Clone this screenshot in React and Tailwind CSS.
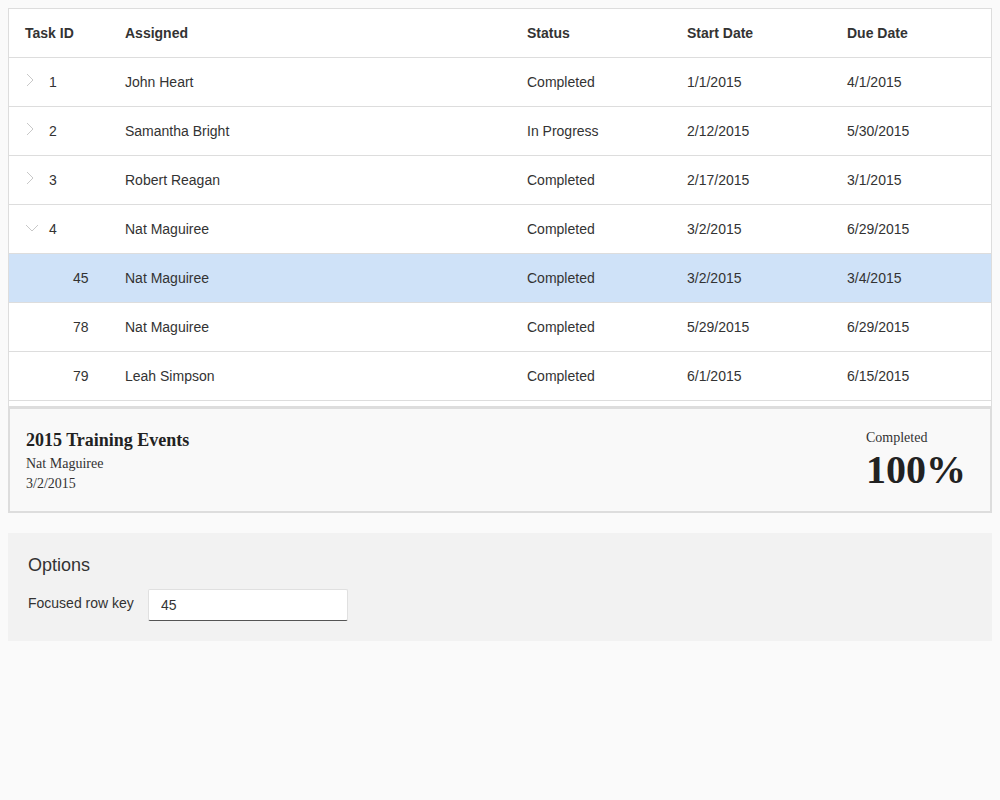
import React from 'react';

const rows = [
  { id: 1, name: 'John Heart', status: 'Completed', start: '1/1/2015', due: '4/1/2015', level: 0, toggle: 'closed' },
  { id: 2, name: 'Samantha Bright', status: 'In Progress', start: '2/12/2015', due: '5/30/2015', level: 0, toggle: 'closed' },
  { id: 3, name: 'Robert Reagan', status: 'Completed', start: '2/17/2015', due: '3/1/2015', level: 0, toggle: 'closed' },
  { id: 4, name: 'Nat Maguiree', status: 'Completed', start: '3/2/2015', due: '6/29/2015', level: 0, toggle: 'open' },
  { id: 45, name: 'Nat Maguiree', status: 'Completed', start: '3/2/2015', due: '3/4/2015', level: 1 },
  { id: 78, name: 'Nat Maguiree', status: 'Completed', start: '5/29/2015', due: '6/29/2015', level: 1 },
  { id: 79, name: 'Leah Simpson', status: 'Completed', start: '6/1/2015', due: '6/15/2015', level: 1 },
];

const cols = 'grid grid-cols-[100px_402px_160px_160px_1fr]';

function Chevron({ open }) {
  if (open) {
    return (
      <svg width="14" height="8" viewBox="0 0 14 8" className="absolute left-[16px] top-[5px]">
        <path d="M1 1 L7 7 L13 1" fill="none" stroke="#c8c8c8" strokeWidth="1" />
      </svg>
    );
  }
  return (
    <svg width="8" height="14" viewBox="0 0 8 14" className="absolute left-[17px] top-[1px]">
      <path d="M1 1 L7 7 L1 13" fill="none" stroke="#c8c8c8" strokeWidth="1" />
    </svg>
  );
}

export default function App() {
  const focused = 45;

  return (
    <div className="min-h-[800px] bg-[#fafafa] p-2 text-[14px] text-[#333]" style={{ fontFamily: '"Liberation Sans", Arial, sans-serif' }}>
      {/* grid */}
      <div className="h-[399px] border border-[#ddd] bg-white">
        <div className={`${cols} h-[49px] border-b border-[#ddd] items-center font-bold`}>
          <div className="px-4">Task ID</div>
          <div className="px-4">Assigned</div>
          <div className="px-4">Status</div>
          <div className="px-4">Start Date</div>
          <div className="px-4">Due Date</div>
        </div>
        {rows.map((r) => (
          <div
            key={r.id}
            className={`${cols} h-[49px] border-b border-[#ddd] items-center ${r.id === focused ? 'bg-[#cfe2f8]' : ''}`}
          >
            <div className="relative">
              {r.toggle && <Chevron open={r.toggle === 'open'} />}
              <span className={r.level ? 'pl-[64px]' : 'pl-[40px]'}>{r.id}</span>
            </div>
            <div className="px-4">{r.name}</div>
            <div className="px-4">{r.status}</div>
            <div className="px-4">{r.start}</div>
            <div className="px-4">{r.due}</div>
          </div>
        ))}
      </div>

      {/* detail panel */}
      <div
        className="flex h-[106px] justify-between border-2 border-[#ddd] bg-[#f9f9f9] pl-4 pr-6 pt-[19px] text-[#222]"
        style={{ fontFamily: '"Liberation Serif", "Times New Roman", serif' }}
      >
        <div>
          <div className="text-[18px] font-bold leading-[24px]">2015 Training Events</div>
          <div className="mt-[2px] text-[14px] leading-[20px] text-[#333]">Nat Maguiree</div>
          <div className="text-[14px] leading-[20px] text-[#333]">3/2/2015</div>
        </div>
        <div className="mt-[1px]">
          <div className="text-[14px] leading-[18px] text-[#333]">Completed</div>
          <div className="text-[40px] font-bold leading-[46px]">100%</div>
        </div>
      </div>

      {/* options */}
      <div className="mt-5 h-[108px] bg-[#f2f2f2] px-5 pt-[20px]">
        <div className="text-[18px] leading-[24px] text-[#333]">Options</div>
        <div className="mt-[12px] flex items-center">
          <span className="w-[120px] -mt-[4px]">Focused row key</span>
          <input
            readOnly
            value="45"
            className="h-[32px] w-[200px] rounded-[2px] border border-[#e0e0e0] border-b-[#555] bg-white px-3 text-[14px] text-[#333] outline-none"
          />
        </div>
      </div>
    </div>
  );
}
